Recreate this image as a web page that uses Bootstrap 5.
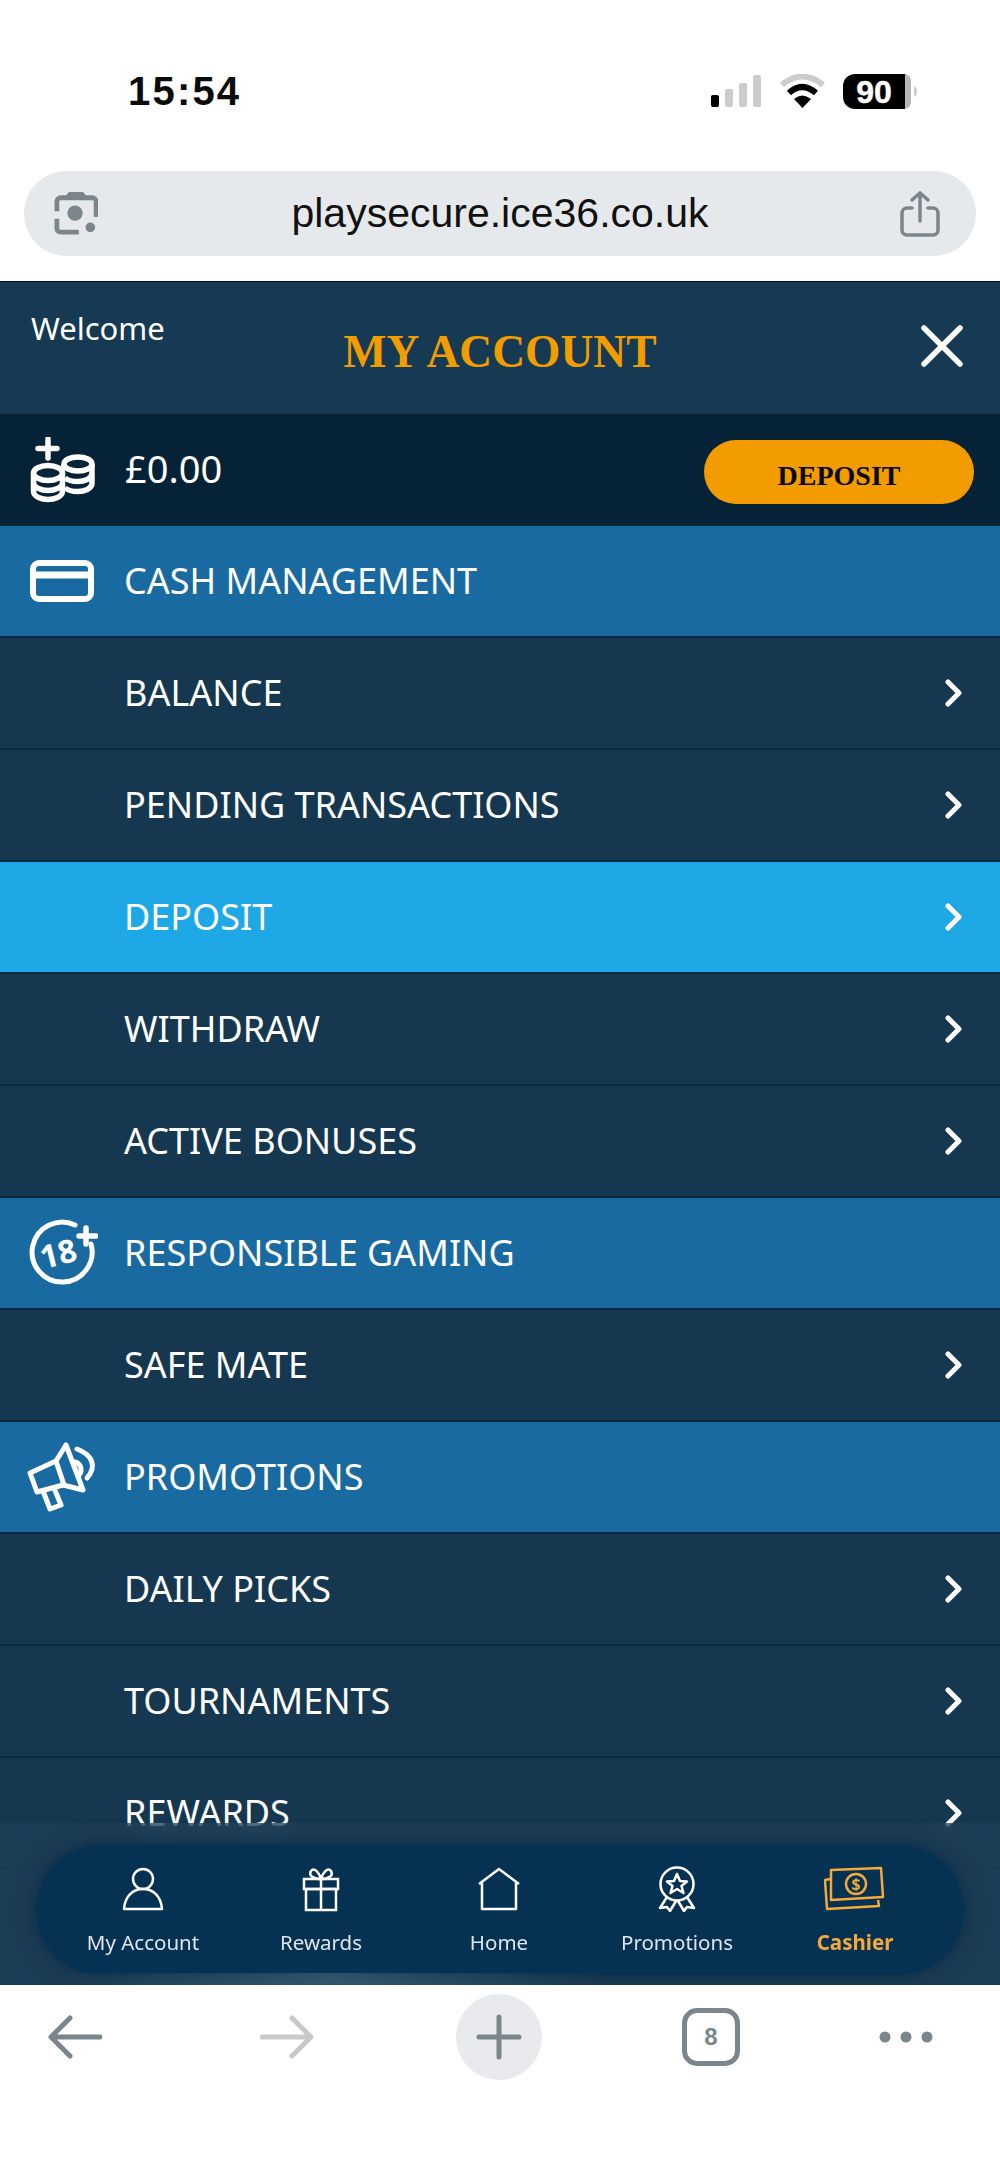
<!DOCTYPE html>
<html lang="en">
<head>
  <meta charset="UTF-8" />
  <meta name="viewport" content="width=device-width, initial-scale=1.0">
  <title>My Account</title>
  <link href="https://cdn.jsdelivr.net/npm/bootstrap@5.3.3/dist/css/bootstrap.min.css" rel="stylesheet"/>
  <style>
    html, body { margin: 0; background: #fff; }
    body { width: 1000px; height: 2171px; overflow: hidden; font-family: "Noto Sans", sans-serif; }
    .status-strip { height: 171px; padding: 74px 83px 0 128px; }
    .clock { font: 700 40px/34px "Liberation Sans", sans-serif; letter-spacing: 2.2px; color: #0c0c0c; }
    .address-bar { height: 85px; margin: 0 24px; background: #e6e9ec; border-radius: 42px; padding: 0 36px 0 30px; }
    .address-text { font: 400 41px/1 "Liberation Sans", sans-serif; color: #111; margin-left: 2px; }
    .address-gap { height: 25px; }

    .account-panel { height: 1704px; overflow: hidden; position: relative; border-top: 1px solid #0b0f14; background: #163750; }
    .panel-head { height: 132px; background: #163a53; color: #fff; position: relative; }
    .welcome-text { position: absolute; left: 31px; top: 25px; font-size: 31px; line-height: 42px; }
    .panel-title { padding-top: 39px; text-align: center; font: 700 45.500px/62px "Liberation Serif", serif; color: #f39c00; }
    .close-x { position: absolute; left: 920px; top: 42px; }
    .balance-row { height: 112px; background: #052236; color: #fff; padding: 0 26px 0 30px; }
    .balance-amount { font-size: 38px; margin-left: 29px; margin-top: -3px; }
    .deposit-pill { width: 270px; height: 64px; background: #f39c00; border-radius: 32px; border: 0; padding: 7px 0 0; margin-top: 4px;
      font: 700 28px/1 "Liberation Serif", serif; color: #0a0a0a; }
    .deposit-pill:hover { background: #f39c00; color: #0a0a0a; }

    .menu-row { height: 112px; padding-left: 124px; padding-right: 36px; color: #fff; font-size: 36px; background: #163750;
      border-bottom: 2px solid #0a2a41; text-decoration: none; position: relative; }
    .menu-row.menu-head { background: #196aa1; }
    .menu-row.menu-on { background: #1ea8e6; }
    .menu-glyph { position: absolute; left: 26px; top: 50%; transform: translateY(-50%); }

    .dock-wrap { position: absolute; left: 0; right: 0; bottom: 0; height: 162px; padding: 22px 36px 10px;
      background: rgba(34, 68, 92, .55); backdrop-filter: blur(14px); }
    .dock-wrap::after { content: ""; position: absolute; left: 60px; right: 400px; bottom: 0; height: 12px;
      background: linear-gradient(90deg, transparent, rgba(120,150,170,.3), transparent); }
    .dock { height: 130px; border-radius: 65px; background: #053252; box-shadow: 0 0 22px rgba(6,36,58,.7); padding: 0 18px; }
    .dock-item { width: 178px; color: #dfe5ea; font-size: 20.500px; text-decoration: none; line-height: 1; }
    .dock-item svg { height: 46px; margin: 21px 0 20px; display: block; }
    .dock-item.dock-on { color: #f5a93b; font-weight: 700; }

    .browser-bar { height: 186px; padding-top: 9px; position: relative; }
    .tool-slot { width: 212px; flex: none; }
    .tool-slot.tool-last { width: 178px; }
    .new-tab { width: 86px; height: 86px; border-radius: 50%; background: #e8eaee; }
    .tabs-box { width: 58px; height: 58px; border: 5px solid #7b858c; border-radius: 15px; color: #7b858c; font: 700 24px/1 "Liberation Sans", sans-serif; }
    .browser-tools { height: 86px; margin-left: -31px; }
  </style>
</head>
<body>

<!-- Phone status bar -->
<div class="status-strip d-flex justify-content-between">
  <span class="clock">15:54</span>
  <svg width="206" height="36" viewBox="711 73 206 36">
    <rect x="711" y="94" width="8" height="12" rx="2" fill="#000"/>
    <rect x="725" y="88" width="8" height="18" rx="2" fill="#ccc"/>
    <rect x="739" y="82" width="8" height="24" rx="2" fill="#ccc"/>
    <rect x="753" y="74" width="8" height="32" rx="2" fill="#ccc"/>
    <path d="M782 84 Q802 67 823 84" fill="none" stroke="#ccc" stroke-width="6"/>
    <path d="M789 92 Q802 80 816 92" fill="none" stroke="#000" stroke-width="6"/>
    <path d="M794 98 Q802 91 811 98 L802.500 107Z" fill="#000"/>
    <path d="M843 85 a12 12 0 0 1 12 -12 H905 V108 H855 a12 12 0 0 1 -12 -12Z" fill="#000"/>
    <path d="M905 73 a7 7 0 0 1 6 7 V101 a7 7 0 0 1 -6 7Z" fill="#b5b5b5"/>
    <path d="M914 85 a5 6 0 0 1 3 6 a5 6 0 0 1 -3 5Z" fill="#ccc"/>
    <text x="874" y="102" text-anchor="middle" font-family="Liberation Sans" font-weight="700" font-size="32" fill="#fff" stroke="#fff" stroke-width=".5">90</text>
  </svg>
</div>

<div class="address-bar d-flex align-items-center justify-content-between">
  <svg width="44" height="46" viewBox="0 0 46 46" fill="none" stroke="#7b858c" stroke-width="5">
    <path d="M3 20 V10 a4 4 0 0 1 4 -4 H40 a4 4 0 0 1 4 4 V20" />
    <path d="M13 5 L16 1 H30 L33 5Z" fill="#7b858c" stroke-width="2"/>
    <circle cx="22" cy="22" r="8" fill="#7b858c" stroke="none"/>
    <path d="M3 28 V38 a4 4 0 0 0 4 4 H26"/>
    <circle cx="38" cy="37" r="5" fill="#7b858c" stroke="none"/>
    <path d="M44 20 V26"/>
  </svg>
  <span class="address-text">playsecure.ice36.co.uk</span>
  <svg width="40" height="46" viewBox="0 0 40 46" fill="none" stroke="#7b858c" stroke-width="3.500" stroke-linecap="round">
    <path d="M12 17 H7 a5 5 0 0 0 -5 5 V39 a5 5 0 0 0 5 5 H33 a5 5 0 0 0 5 -5 V22 a5 5 0 0 0 -5 -5 H28"/>
    <path d="M20 30 V2 M12 9 L20 2 L28 9"/>
  </svg>
</div>
<div class="address-gap"></div>

<div class="account-panel">

  <div class="panel-head">
    <span class="welcome-text">Welcome</span>
    <div class="panel-title">MY ACCOUNT</div>
    <svg class="close-x" width="44" height="44" viewBox="0 0 44 44" stroke="#fff" stroke-width="5.500" stroke-linecap="round">
      <path d="M4 4 L40 40 M40 4 L4 40"/>
    </svg>
  </div>

  <div class="balance-row d-flex align-items-center">
    <svg width="66" height="66" viewBox="0 0 66 66" fill="none" stroke="#fff" stroke-width="5.500">
      <path d="M18 2 V21 M8 11.500 H27" stroke-width="5.500" stroke-linecap="round"/>
      <ellipse cx="18" cy="36" rx="14.500" ry="7.500"/>
      <path d="M3.500 36 V54 C3.500 60 12 62.500 18 62.500 C24 62.500 32.500 60 32.500 54 V36 M3.500 45 C3.500 51 12 53.500 18 53.500 C24 53.500 32.500 51 32.500 45"/>
      <ellipse cx="48" cy="27" rx="14" ry="7"/>
      <path d="M62 27 V46 C62 52 54 54.500 48 54.500 C44 54.500 38 53.500 35 51 M62 36 C62 42 54 44.500 48 44.500 C43 44.500 38 43.500 35 41 M34 27 V33"/>
    </svg>
    <span class="balance-amount">£0.00</span>
    <button class="btn deposit-pill ms-auto" type="button">DEPOSIT</button>
  </div>

  <a class="menu-row menu-head d-flex align-items-center" href="#">
    <svg class="menu-glyph" width="72" height="48" viewBox="0 0 72 48" fill="none" stroke="#fff" stroke-width="6">
      <rect x="7" y="6" width="58" height="36" rx="6"/>
      <path d="M6 18 H66" stroke-width="7"/>
    </svg>
    CASH MANAGEMENT
  </a>
  <div id="cashRows"></div>

  <a class="menu-row menu-head d-flex align-items-center" href="#">
    <svg class="menu-glyph" width="72" height="72" viewBox="0 0 72 72" fill="none" stroke="#fff" stroke-width="5" stroke-linecap="round">
      <path d="M49 8 A30 30 0 1 0 65 27"/>
      <path d="M60 11 V27 M53 19 H70" stroke-width="5.500"/>
      <text x="33" y="48" text-anchor="middle" transform="rotate(-14 33 40)" font-family="Noto Sans" font-weight="700" font-size="32" fill="#fff" stroke="none">18</text>
    </svg>
    RESPONSIBLE GAMING
  </a>
  <div id="gamingRows"></div>

  <a class="menu-row menu-head d-flex align-items-center" href="#">
    <svg class="menu-glyph" width="72" height="72" viewBox="27 1440 72 72" fill="none" stroke="#fff" stroke-width="5" stroke-linejoin="round" stroke-linecap="round">
      <path d="M31 1472 L57 1460 L67 1444 L84 1489 L64 1484 L38 1491Z"/>
      <path d="M57 1460 L65 1484"/>
      <path d="M44 1490 L51 1508 L62 1504 L55 1487"/>
      <path d="M76 1461 a8 8 0 0 1 3 14"/>
      <path d="M78 1448 C94 1454 98 1466 88 1477"/>
    </svg>
    PROMOTIONS
  </a>
  <div id="promoRows"></div>

  <!-- Floating dock over the list -->
  <div class="dock-wrap">
    <div class="dock d-flex">
      <a class="dock-item d-flex flex-column align-items-center" href="#">
        <svg width="42" height="46" viewBox="0 0 42 46" fill="none" stroke="#fff" stroke-width="2.500">
          <circle cx="21" cy="13" r="10"/>
          <path d="M2 43 C3 30 11 23 21 23 C31 23 39 30 40 43Z" stroke-linejoin="round"/>
        </svg>
        My Account
      </a>
      <a class="dock-item d-flex flex-column align-items-center" href="#">
        <svg width="38" height="46" viewBox="0 0 38 46" fill="none" stroke="#fff" stroke-width="2.500">
          <rect x="2" y="13" width="34" height="10"/>
          <rect x="4" y="23" width="30" height="21"/>
          <path d="M19 13 V44"/>
          <path d="M19 13 C12 13 6 10 9 5 C12 1 17 6 19 13 C21 6 26 1 29 5 C32 10 26 13 19 13Z"/>
        </svg>
        Rewards
      </a>
      <a class="dock-item d-flex flex-column align-items-center" href="#">
        <svg width="44" height="46" viewBox="0 0 44 46" fill="none" stroke="#fff" stroke-width="2.500" stroke-linejoin="round">
          <path d="M2 18 L22 3 L42 18 M5 16 V43 H39 V16"/>
        </svg>
        Home
      </a>
      <a class="dock-item d-flex flex-column align-items-center" href="#">
        <svg width="38" height="46" viewBox="0 0 38 46" fill="none" stroke="#fff" stroke-width="2.500" stroke-linejoin="round">
          <circle cx="19" cy="18" r="16.500"/>
          <path d="M19 8 L22 15 L29 15.500 L23.500 20 L25.500 27 L19 23 L12.500 27 L14.500 20 L9 15.500 L16 15Z"/>
          <path d="M9 31 L2 42 L9 41 L12 45 L18 35 M29 31 L36 42 L29 41 L26 45 L20 35"/>
        </svg>
        Promotions
      </a>
      <a class="dock-item dock-on d-flex flex-column align-items-center" href="#">
        <svg width="62" height="46" viewBox="0 0 62 46" fill="none" stroke="#f5a93b" stroke-width="2.500" stroke-linejoin="round">
          <path d="M7 3 V33 L59 30 L57 1Z" transform="translate(0 1)"/>
          <path d="M6 13 L1 14 L3 43 L55 40 L54 34"/>
          <circle cx="32" cy="18" r="10"/>
          <text x="32" y="24" text-anchor="middle" font-family="Noto Sans" font-weight="700" font-size="16" fill="#f5a93b" stroke="none">$</text>
        </svg>
        Cashier
      </a>
    </div>
  </div>
</div>

<!-- Browser toolbar -->
<div class="browser-bar">
  <div class="browser-tools d-flex align-items-center">
    <div class="tool-slot d-flex justify-content-center">
      <svg width="54" height="44" viewBox="0 0 54 44" fill="none" stroke="#7b858c" stroke-width="5" stroke-linecap="round" stroke-linejoin="round">
        <path d="M52 22 H4 M22 3 L3 22 L22 41"/>
      </svg>
    </div>
    <div class="tool-slot d-flex justify-content-center">
      <svg width="54" height="44" viewBox="0 0 54 44" fill="none" stroke="#c9c9c9" stroke-width="5" stroke-linecap="round" stroke-linejoin="round">
        <path d="M2 22 H50 M32 3 L51 22 L32 41"/>
      </svg>
    </div>
    <div class="tool-slot d-flex justify-content-center">
      <div class="new-tab d-flex align-items-center justify-content-center">
        <svg width="46" height="46" viewBox="0 0 46 46" stroke="#7b858c" stroke-width="5" stroke-linecap="round"><path d="M23 3 V43 M3 23 H43"/></svg>
      </div>
    </div>
    <div class="tool-slot d-flex justify-content-center">
      <div class="tabs-box d-flex align-items-center justify-content-center">8</div>
    </div>
    <div class="tool-slot tool-last d-flex justify-content-center">
      <svg width="54" height="12" viewBox="0 0 54 12" fill="#7b858c">
        <circle cx="6" cy="6" r="5.500"/><circle cx="27" cy="6" r="5.500"/><circle cx="48" cy="6" r="5.500"/>
      </svg>
    </div>
  </div>
</div>

<script>
  const chevron = '<svg class="ms-auto" width="20" height="28" viewBox="0 0 20 28" fill="none" stroke="#fff" stroke-width="5" stroke-linecap="round" stroke-linejoin="round"><path d="M4 3 L15 14 L4 25"/></svg>';

  function fillRows(id, rows) {
    document.getElementById(id).innerHTML = rows.map(r => `
      <a class="menu-row d-flex align-items-center ${r === 'DEPOSIT' ? 'menu-on' : ''}" href="#">${r}${chevron}</a>
    `).join('');
  }

  fillRows('cashRows', ['BALANCE', 'PENDING TRANSACTIONS', 'DEPOSIT', 'WITHDRAW', 'ACTIVE BONUSES']);
  fillRows('gamingRows', ['SAFE MATE']);
  fillRows('promoRows', ['DAILY PICKS', 'TOURNAMENTS', 'REWARDS']);
</script>
<script src="https://cdn.jsdelivr.net/npm/bootstrap@5.3.3/dist/js/bootstrap.bundle.min.js"></script>
</body>
</html>
